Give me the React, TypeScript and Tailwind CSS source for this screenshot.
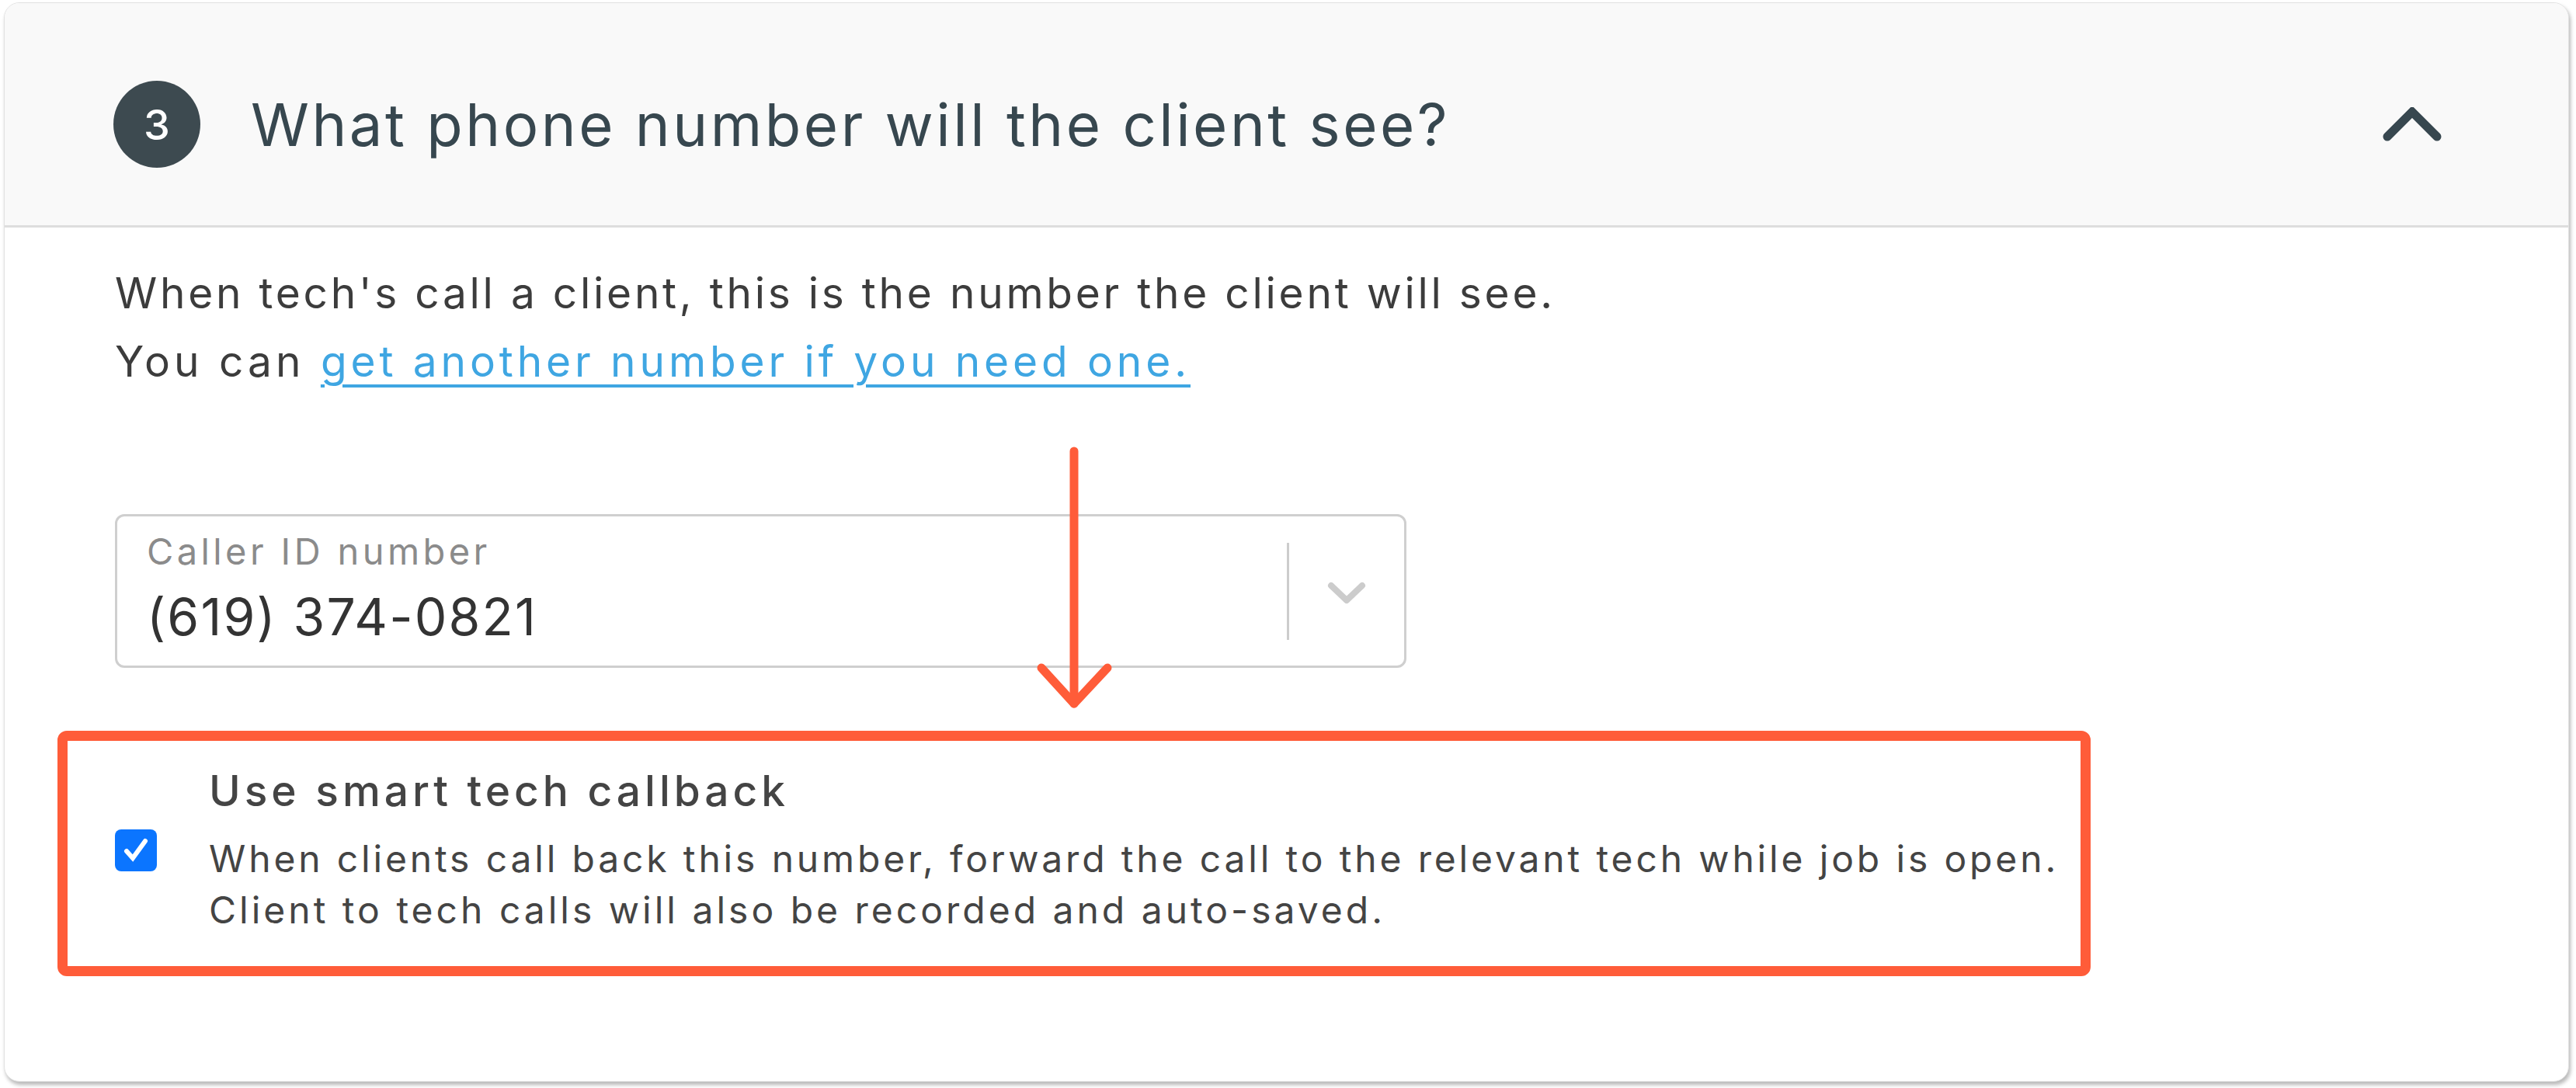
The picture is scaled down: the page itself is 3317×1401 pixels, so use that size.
function ChevronUp() {
  return (
    <svg width="76" height="44" viewBox="0 0 76 44" fill="none">
      <path d="M6 38 L38 6 L70 38" stroke="#37474f" strokeWidth="11" strokeLinecap="round" strokeLinejoin="miter" />
    </svg>
  );
}

function ChevronDown() {
  return (
    <svg width="50" height="30" viewBox="0 0 50 30" fill="none">
      <path d="M5 5 L25 24 L45 5" stroke="#cccccc" strokeWidth="8" strokeLinecap="round" strokeLinejoin="round" />
    </svg>
  );
}

function DownArrow() {
  return (
    <svg width="110" height="345" viewBox="0 0 110 345" fill="none">
      <path d="M53 11 L53 336" stroke="#ff5c39" strokeWidth="11" strokeLinecap="round" />
      <path d="M11 290 L53 336 L96 290" stroke="#ff5c39" strokeWidth="11" strokeLinecap="round" strokeLinejoin="round" />
    </svg>
  );
}

export default function App() {
  return (
    <div className="relative w-[3317px] h-[1401px] bg-white pl-[5px] pt-[3px] font-['Inter',sans-serif]">
      <div className="w-[3303px] h-[1390px] rounded-[20px] border border-[#e2e2e2] bg-white shadow-[2px_4px_5px_rgba(0,0,0,0.28)] overflow-hidden">
        {/* header */}
        <div className="h-[289px] bg-[#f9f9f9] border-b-[3px] border-[#dedede] flex items-center pt-[26px] pl-[140px] pr-[163px]">
          <div className="w-[112px] h-[112px] rounded-full bg-[#3d4a50] flex items-center justify-center text-white text-[54px] font-medium">
            3
          </div>
          <h2 className="ml-[65px] text-[76px] tracking-[3.5px] text-[#37474f] font-normal leading-none flex-1">
            What phone number will the client see?
          </h2>
          <ChevronUp />
        </div>

        {/* body */}
        <div className="pt-[40px] pl-[142px]">
          <p className="text-[55px] leading-[88px] text-[#3c3c3c]">
            <span className="tracking-[3.75px]">When tech's call a client, this is the number the client will see.</span>
            <br />
            <span className="tracking-[5px]">You can </span>
            <a href="#" className="tracking-[4.9px] text-[#3fa6e2] underline decoration-[4px] underline-offset-[10px]">
              get another number if you need one.
            </a>
          </p>

          <div className="mt-[153px] w-[1663px] h-[198px] border-[3px] border-[#cfcfcf] rounded-[12px] flex items-center">
            <div className="flex-1 self-stretch pl-[38px] pt-[21px] flex flex-col">
              <span className="text-[47px] leading-none tracking-[4.4px] text-[#8b8b8b]">Caller ID number</span>
              <span className="mt-[28px] text-[66px] leading-none tracking-[2.2px] text-[#333333]">(619) 374-0821</span>
            </div>
            <div className="w-[3px] h-[125px] bg-[#cccccc]" />
            <div className="w-[148px] flex items-center justify-center pt-[6px]">
              <ChevronDown />
            </div>
          </div>

          <div className="mt-[125px] flex items-center">
            <div className="w-[54px] h-[54px] rounded-[8px] bg-[#0b75ff] flex items-center justify-center">
              <svg width="40" height="40" viewBox="0 0 40 40" fill="none">
                <path d="M8 21 L16 30 L32 8" stroke="white" strokeWidth="6" strokeLinecap="round" strokeLinejoin="miter" />
              </svg>
            </div>
            <div className="ml-[67px]">
              <div className="text-[55px] leading-[66px] tracking-[5px] font-medium text-[#444444]">Use smart tech callback</div>
              <p className="mt-[22px] text-[48px] leading-[66px] text-[#444444]">
                <span className="tracking-[3.85px]">When clients call back this number, forward the call to the relevant tech while job is open.</span>
                <br />
                <span className="tracking-[4px]">Client to tech calls will also be recorded and auto-saved.</span>
              </p>
            </div>
          </div>
        </div>
      </div>

      {/* annotation overlays */}
      <div className="absolute left-[1330px] top-[570px]">
        <DownArrow />
      </div>
      <div className="absolute left-[74px] top-[941px] w-[2618px] h-[316px] border-[13px] border-[#ff5c39] rounded-[12px]" />
    </div>
  );
}
